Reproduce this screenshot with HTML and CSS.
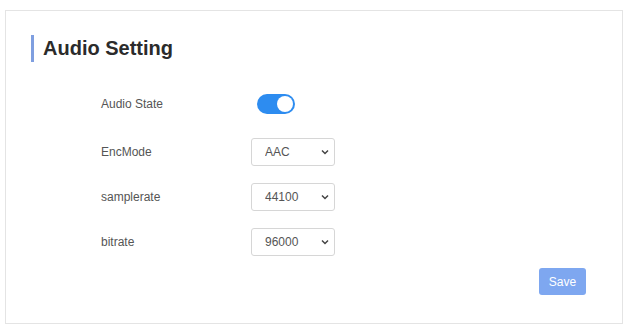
FILE: index.html
```html
<!DOCTYPE html>
<html lang="en">
<head>
  <meta charset="UTF-8">
  <meta name="viewport" content="width=device-width, initial-scale=1.0">
  <title>Audio Setting</title>
  <link rel="stylesheet" href="styles.css">
</head>
<body>
  <div class="card">
    <h2 class="title">Audio Setting</h2>
    <form class="settings">
      <div class="row row-first">
        <label class="label">Audio State</label>
        <span class="switch"><span class="knob"></span></span>
      </div>
      <div class="row">
        <label class="label" for="encmode">EncMode</label>
        <div class="select-wrap">
          <select id="encmode" class="select">
            <option>AAC</option>
          </select>
          <svg class="chevron" width="8" height="6" viewBox="0 0 8 6"><path d="M1 1.5 L4 4.5 L7 1.5" fill="none" stroke="#444" stroke-width="1.5"/></svg>
        </div>
      </div>
      <div class="row">
        <label class="label" for="samplerate">samplerate</label>
        <div class="select-wrap">
          <select id="samplerate" class="select">
            <option>44100</option>
          </select>
          <svg class="chevron" width="8" height="6" viewBox="0 0 8 6"><path d="M1 1.5 L4 4.5 L7 1.5" fill="none" stroke="#444" stroke-width="1.5"/></svg>
        </div>
      </div>
      <div class="row">
        <label class="label" for="bitrate">bitrate</label>
        <div class="select-wrap">
          <select id="bitrate" class="select">
            <option>96000</option>
          </select>
          <svg class="chevron" width="8" height="6" viewBox="0 0 8 6"><path d="M1 1.5 L4 4.5 L7 1.5" fill="none" stroke="#444" stroke-width="1.5"/></svg>
        </div>
      </div>
      <div class="actions">
        <button type="button" class="save">Save</button>
      </div>
    </form>
  </div>
</body>
</html>
```

FILE: styles.css
```css
body {
  margin: 0;
  padding: 0;
  background: #fff;
  font-family: "Liberation Sans", Arial, sans-serif;
  color: #333;
}
.card {
  margin: 10px 6px 0 5px;
  height: 312px;
  border: 1px solid #e4e4e4;
  box-sizing: content-box;
  display: flex;
  flex-direction: column;
}
.title {
  margin: 24px 0 0 25px;
  padding-left: 9px;
  border-left: 3px solid #7f9fe0;
  font-size: 20px;
  line-height: 27px;
  font-weight: bold;
  color: #2b2b2b;
}
.settings {
  padding: 0 36px 0 95px;
}
.row {
  display: flex;
  align-items: center;
  height: 28px;
  margin-top: 17px;
}
.row-first {
  margin-top: 28px;
  margin-bottom: 20px;
}
.label {
  width: 150px;
  font-size: 12px;
  color: #555;
}
.switch {
  position: relative;
  display: inline-block;
  width: 38px;
  height: 20px;
  margin-left: 6px;
  border-radius: 10px;
  background: #2d8cf0;
}
.knob {
  position: absolute;
  right: 2px;
  top: 2px;
  width: 16px;
  height: 16px;
  border-radius: 50%;
  background: #fff;
}
.select-wrap {
  position: relative;
  width: 84px;
  height: 28px;
}
.select {
  appearance: none;
  -webkit-appearance: none;
  width: 100%;
  height: 100%;
  padding: 0 0 0 13px;
  border: 1px solid #d6d6d6;
  border-radius: 3px;
  background: #fff;
  font-family: "Liberation Sans", Arial, sans-serif;
  font-size: 12px;
  color: #555;
  outline: none;
}
.chevron {
  position: absolute;
  right: 6px;
  top: 11px;
  pointer-events: none;
}
.actions {
  display: flex;
  justify-content: flex-end;
  margin-top: 12px;
}
.save {
  width: 47px;
  height: 27px;
  padding: 0;
  border: none;
  border-radius: 3px;
  background: #7ea7f0;
  color: #fff;
  font-family: "Liberation Sans", Arial, sans-serif;
  font-size: 12px;
  cursor: pointer;
}
```
